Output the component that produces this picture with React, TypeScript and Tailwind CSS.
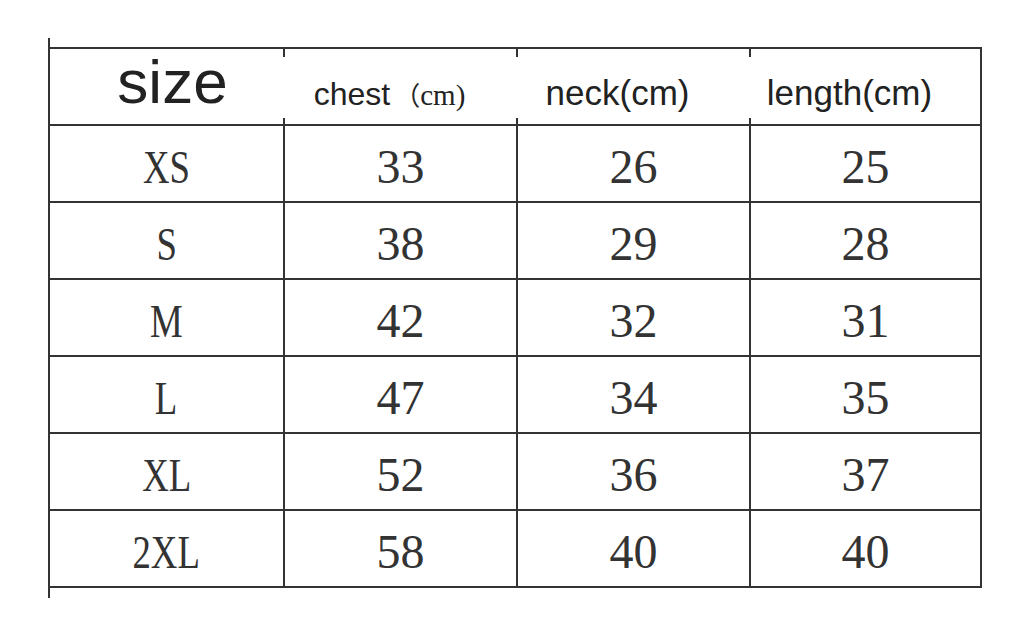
import React from 'react';

type Row = { size: string; chest: string; neck: string; length: string };

const rows: Row[] = [
  { size: 'XS', chest: '33', neck: '26', length: '25' },
  { size: 'S', chest: '38', neck: '29', length: '28' },
  { size: 'M', chest: '42', neck: '32', length: '31' },
  { size: 'L', chest: '47', neck: '34', length: '35' },
  { size: 'XL', chest: '52', neck: '36', length: '37' },
  { size: '2XL', chest: '58', neck: '40', length: '40' },
];

const sans = "font-['Liberation_Sans',Arial,sans-serif]";
const serif = "font-['Liberation_Serif','Times_New_Roman',serif]";

// header cell: the inner column lines only show as short ticks at top and bottom
const HeaderCell: React.FC<{ first?: boolean; children: React.ReactNode; textClass?: string }> = ({ first, children, textClass }) => (
  <div className="flex flex-col h-[75px]">
    <div className={`w-[2px] h-[8px] ${first ? 'bg-transparent' : 'bg-[#333]'}`}></div>
    <div className={`flex-1 flex items-end justify-center ${textClass ?? ''}`}>{children}</div>
    <div className={`w-[2px] h-[6px] ${first ? 'bg-transparent' : 'bg-[#333]'}`}></div>
  </div>
);

const App: React.FC = () => {
  return (
    <div className="w-[1024px] h-[642px] bg-white overflow-hidden">
      <div className="flex items-start pt-[38px] pl-[48px]">
        {/* left rule runs past the table top and bottom */}
        <div className="w-[2px] h-[560px] bg-[#333]"></div>

        <div className="mt-[9px] w-[932px] border-t-2 border-r-2 border-[#333] text-[#333]">
          {/* Header */}
          <div className="grid grid-cols-[233px_233px_233px_231px] border-b-2 border-[#333] text-[#222]">
            <HeaderCell first textClass="pb-[9px] pl-[12px]">
              <span className={`${sans} text-[62px] leading-none`}>size</span>
            </HeaderCell>
            <HeaderCell textClass="pb-[8px] pr-[20px]">
              <span className={`${sans} text-[32px] leading-none`}>
                chest
                <span className="font-['Noto_Sans_CJK_SC',sans-serif] text-[26px] ml-[4px]">（</span>
                <span className={`${serif} text-[29px]`}>cm)</span>
              </span>
            </HeaderCell>
            <HeaderCell textClass="pb-[8px] pr-[30px]">
              <span className={`${sans} text-[35px] leading-none`}>neck(cm)</span>
            </HeaderCell>
            <HeaderCell textClass="pb-[8px] pr-[30px]">
              <span className={`${sans} text-[35px] leading-none`}>length(cm)</span>
            </HeaderCell>
          </div>

          {/* Body */}
          {rows.map((r) => (
            <div key={r.size} className="grid grid-cols-[233px_233px_233px_231px] h-[77px] border-b-2 border-[#333]">
              <div className={`flex items-center justify-center pt-[5px] ${serif} text-[46px]`}>
                <span className="inline-block scale-x-[0.8]">{r.size}</span>
              </div>
              <div className={`flex items-center justify-center pt-[5px] border-l-2 border-[#333] ${serif} text-[48px]`}>{r.chest}</div>
              <div className={`flex items-center justify-center pt-[5px] border-l-2 border-[#333] ${serif} text-[48px]`}>{r.neck}</div>
              <div className={`flex items-center justify-center pt-[5px] border-l-2 border-[#333] ${serif} text-[48px]`}>{r.length}</div>
            </div>
          ))}
        </div>
      </div>
    </div>
  );
};

export default App;
